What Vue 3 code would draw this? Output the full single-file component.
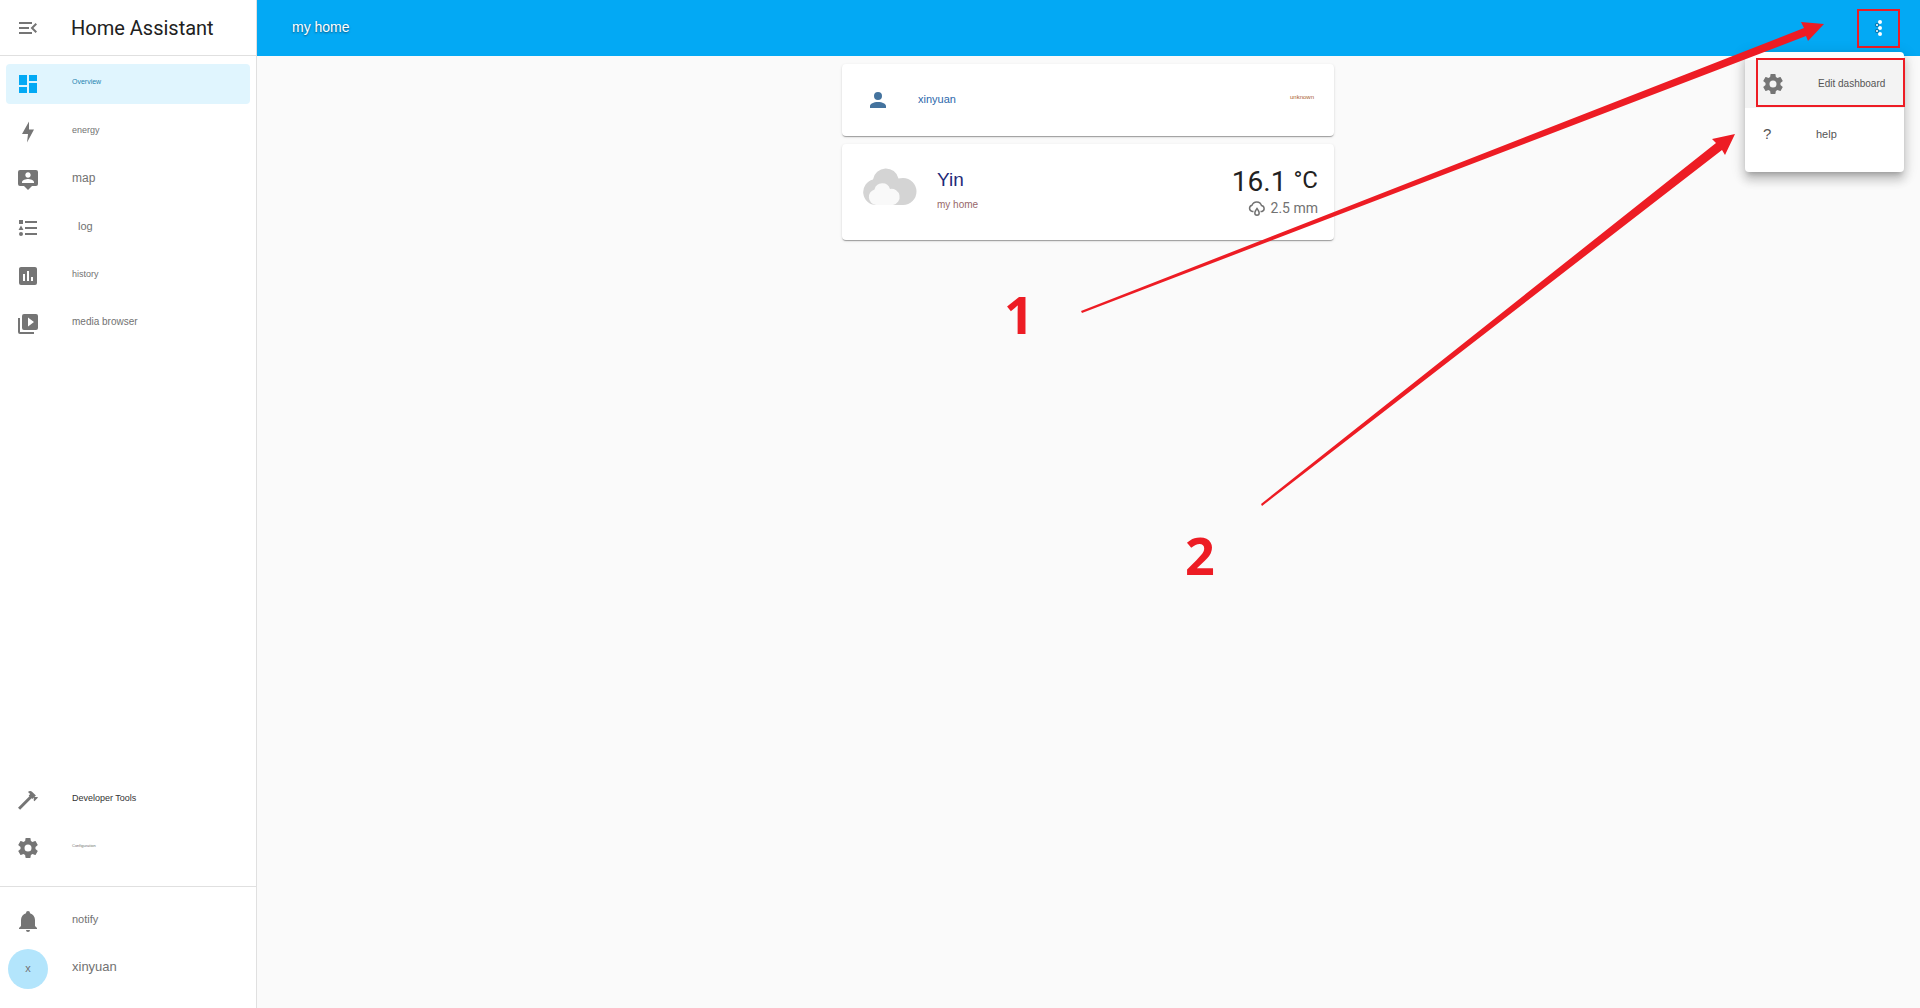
<script setup>
const icons = {
  overview: 'M13,3V9H21V3M13,21H21V11H13M3,21H11V15H3M3,13H11V3H3V13Z',
  energy: 'M11,22.500L12,14H6L13,1.500V9.500H18L11,22.500Z',
  map: 'M20,2H4A2,2 0 0,0 2,4V16A2,2 0 0,0 4,18H8L12,22L16,18H20A2,2 0 0,0 22,16V4A2,2 0 0,0 20,2M12,4.3C13.5,4.3 14.7,5.5 14.7,7C14.7,8.5 13.5,9.7 12,9.7C10.5,9.7 9.3,8.5 9.3,7C9.3,5.5 10.5,4.3 12,4.3M18,15H6V14.1C6,12.1 10,11 12,11C14,11 18,12.1 18,14.1V15Z',
  log: 'M5,9.5L7.5,14H2.5L5,9.5M3,4H7V8H3V4M5,20A2,2 0 0,0 7,18A2,2 0 0,0 5,16A2,2 0 0,0 3,18A2,2 0 0,0 5,20M9,5V7H21V5H9M9,19H21V17H9V19M9,13H21V11H9V13Z',
  history: 'M17,17H15V13H17M13,17H11V7H13M9,17H7V10H9M19,3H5C3.89,3 3,3.89 3,5V19A2,2 0 0,0 5,21H19A2,2 0 0,0 21,19V5C21,3.89 20.1,3 19,3Z',
  media: 'M4,6H2V20A2,2 0 0,0 4,22H18V20H4V6M20,2H8A2,2 0 0,0 6,4V16A2,2 0 0,0 8,18H20A2,2 0 0,0 22,16V4A2,2 0 0,0 20,2M12,14.5V5.5L18,10L12,14.5Z',
  hammer: 'M2,19.63L13.43,8.2L12.72,7.5L14.14,6.07L12,3.89C13.2,2.7 15.09,2.7 16.27,3.89L19.87,7.5L18.45,8.91H21.29L22,9.62L18.45,13.21L17.74,12.5V9.62L16.27,11.04L15.56,10.33L4.13,21.76L2,19.63Z',
  cog: 'M12,15.5A3.5,3.5 0 0,1 8.5,12A3.5,3.5 0 0,1 12,8.5A3.5,3.5 0 0,1 15.5,12A3.5,3.5 0 0,1 12,15.5M19.43,12.97C19.47,12.65 19.5,12.33 19.5,12C19.5,11.67 19.47,11.34 19.43,11L21.54,9.37C21.73,9.22 21.78,8.95 21.66,8.73L19.66,5.27C19.54,5.05 19.27,4.96 19.05,5.05L16.56,6.05C16.04,5.66 15.5,5.32 14.87,5.07L14.5,2.42C14.46,2.18 14.25,2 14,2H10C9.75,2 9.54,2.18 9.5,2.42L9.13,5.07C8.5,5.32 7.96,5.66 7.44,6.05L4.95,5.05C4.73,4.96 4.46,5.05 4.34,5.27L2.34,8.73C2.21,8.95 2.27,9.22 2.46,9.37L4.57,11C4.53,11.34 4.5,11.67 4.5,12C4.5,12.33 4.53,12.65 4.57,12.97L2.46,14.63C2.27,14.78 2.21,15.05 2.34,15.27L4.34,18.73C4.46,18.95 4.73,19.03 4.95,18.95L7.44,17.94C7.96,18.34 8.5,18.68 9.13,18.93L9.5,21.58C9.54,21.82 9.75,22 10,22H14C14.25,22 14.46,21.82 14.5,21.58L14.87,18.93C15.5,18.67 16.04,18.34 16.56,17.94L19.05,18.95C19.27,19.03 19.54,18.95 19.66,18.73L21.66,15.27C21.78,15.05 21.73,14.78 21.54,14.63L19.43,12.97Z',
  bell: 'M21,19V20H3V19L5,17V11C5,7.9 7.03,5.17 10,4.29C10,4.19 10,4.1 10,4A2,2 0 0,1 12,2A2,2 0 0,1 14,4C14,4.1 14,4.19 14,4.29C16.97,5.17 19,7.9 19,11V17L21,19M14,21A2,2 0 0,1 12,23A2,2 0 0,1 10,21',
  account: 'M12,4A4,4 0 0,1 16,8A4,4 0 0,1 12,12A4,4 0 0,1 8,8A4,4 0 0,1 12,4M12,14C16.42,14 20,15.79 20,18V20H4V18C4,15.79 7.58,14 12,14Z',
  menuOpen: 'M21,15.61L19.59,17L14.58,12L19.59,7L21,8.39L17.44,12L21,15.61M3,6H16V8H3V6M3,13V11H13V13H3M3,18V16H16V18H3Z'
}

const mainItems = [
  { icon: 'overview', label: 'Overview', size: 's7', active: true },
  { icon: 'energy', label: 'energy', size: 's9' },
  { icon: 'map', label: 'map', size: 's12' },
  { icon: 'log', label: 'log', size: 's11', inset: true },
  { icon: 'history', label: 'history', size: 's9' },
  { icon: 'media', label: 'media browser', size: 's10' }
]
const toolItems = [
  { icon: 'hammer', label: 'Developer Tools', size: 's9', dark: true },
  { icon: 'cog', label: 'Configuration', size: 's4' }
]
</script>

<template>
  <div class="app">
    <aside class="sidebar">
      <div class="brand">
        <button class="icon-button" aria-label="Toggle sidebar">
          <svg class="icon" viewBox="0 0 24 24"><path :d="icons.menuOpen" /></svg>
        </button>
        <span class="brand-name">Home Assistant</span>
      </div>
      <nav class="items">
        <a v-for="item in mainItems" :key="item.label" href="#" class="item" :class="{ active: item.active }">
          <svg class="icon" viewBox="0 0 24 24"><path :d="icons[item.icon]" /></svg>
          <span class="label" :class="[item.size, { inset: item.inset }]">{{ item.label }}</span>
        </a>
      </nav>
      <nav class="items tools">
        <a v-for="item in toolItems" :key="item.label" href="#" class="item">
          <svg class="icon" viewBox="0 0 24 24"><path :d="icons[item.icon]" /></svg>
          <span class="label" :class="[item.size, { dark: item.dark }]">{{ item.label }}</span>
        </a>
      </nav>
      <div class="items account">
        <a href="#" class="item">
          <svg class="icon" viewBox="0 0 24 24"><path :d="icons.bell" /></svg>
          <span class="label s11">notify</span>
        </a>
        <a href="#" class="item">
          <span class="avatar">x</span>
          <span class="label s13">xinyuan</span>
        </a>
      </div>
    </aside>

    <div class="page">
      <header class="toolbar">
        <h1 class="title">my home</h1>
        <div class="overflow">
          <button class="more" aria-label="Open menu">
            <svg class="icon" viewBox="0 0 24 24">
              <g class="dots"><circle cx="13" cy="6" r="2" /><circle cx="13" cy="12" r="2" /><circle cx="13" cy="18" r="2" /></g>
              <g class="dots-shade"><circle cx="10" cy="9" r="2" /><circle cx="10" cy="15" r="2" /></g>
              <g class="dots"><circle cx="10" cy="9" r="1" /><circle cx="10" cy="15" r="1" /></g>
            </svg>
          </button>
          <div class="menu" role="menu">
            <button class="menu-item selected" role="menuitem">
              <svg class="icon" viewBox="0 0 24 24"><path :d="icons.cog" /></svg>
              <span class="s10">Edit dashboard</span>
            </button>
            <button class="menu-item help" role="menuitem">
              <span class="question">?</span>
              <span class="s11">help</span>
            </button>
          </div>
        </div>
      </header>

      <main class="view">
        <section class="card person">
          <svg class="icon" viewBox="0 0 24 24"><path :d="icons.account" /></svg>
          <span class="person-name s11">xinyuan</span>
          <span class="person-state">unknown</span>
        </section>
        <section class="card weather">
          <svg class="cloud" viewBox="0 0 54 38">
            <path fill="#d4d4d4" d="M13 38A13 13 0 0 1 10 12.400A13 13 0 0 1 35.500 11.500Q37 11 40 11A13.500 13.500 0 0 1 40 38Z" />
            <path fill="#f9f9f9" d="M13 38A8 8 0 0 1 11.500 22.400A8 8 0 0 1 27 22A8 8 0 0 1 30 38Z" />
          </svg>
          <div class="place">
            <span class="condition">Yin</span>
            <span class="s10 place-name">my home</span>
          </div>
          <div class="reading">
            <div class="temperature">16.1 <span class="unit">°C</span></div>
            <div class="rain">
              <svg class="rain-icon" viewBox="0 0 18 16">
                <path d="M5.500 11.500H4.500A3.200 3.200 0 0 1 4 5.200A5 5 0 0 1 13.500 5.500A3.100 3.100 0 0 1 14 11.500H12.500M9 8.500C7.500 10.500 6.800 11.700 6.800 13A2.200 2.200 0 0 0 11.200 13C11.200 11.700 10.500 10.500 9 8.500Z" />
              </svg>
              <span>2.5 mm</span>
            </div>
          </div>
        </section>
      </main>
    </div>

    <svg class="arrows" viewBox="0 0 1920 1008" preserveAspectRatio="xMaxYMin meet">
      <path d="M1081 311L1804 28L1801 22L1824 24L1808 41L1806 36L1082 313Z" />
      <path d="M1261 504L1716 143L1712 139L1735 134L1725 155L1722 150L1262 506Z" />
    </svg>
    <span class="step step-one">1</span>
    <span class="step step-two">2</span>
  </div>
</template>

<style>
body {
  margin: 0;
  background: #fafafa;
}
</style>

<style scoped>
*,
*::after {
  box-sizing: border-box;
}
.app {
  position: relative;
  display: flex;
  min-height: 100vh;
  font-family: "Liberation Sans", Arial, sans-serif;
  color: #727272;
}
button {
  padding: 0;
  border: 0;
  background: none;
  font-family: inherit;
  color: inherit;
}
.icon {
  display: block;
  flex: none;
  width: 24px;
  height: 24px;
  fill: #757575;
}
.s4 { font-size: 4px; }
.s7 { font-size: 7px; }
.s9 { font-size: 9px; }
.s10 { font-size: 10px; }
.s11 { font-size: 11px; }
.s12 { font-size: 12px; }
.s13 { font-size: 13px; }

.sidebar {
  display: flex;
  flex-direction: column;
  flex: none;
  width: 257px;
  background: #fff;
  border-right: 1px solid #e0e0e0;
}
.brand {
  display: flex;
  align-items: center;
  gap: 31px;
  height: 56px;
  padding-left: 16px;
  border-bottom: 1px solid #e0e0e0;
}
.brand-name {
  font-family: Roboto, sans-serif;
  font-size: 20px;
  color: #212121;
}
.items {
  display: flex;
  flex-direction: column;
  gap: 8px;
  padding: 8px 6px;
}
.tools {
  margin-top: auto;
  padding-bottom: 18px;
}
.account {
  padding: 14px 6px 19px;
  border-top: 1px solid #e0e0e0;
}
.item {
  display: flex;
  align-items: center;
  gap: 32px;
  height: 40px;
  padding-left: 10px;
  border-radius: 4px;
  color: #727272;
  text-decoration: none;
}
.label {
  padding-bottom: 5px;
}
.inset {
  padding-left: 6px;
}
.dark {
  color: #333;
}
.active {
  background: #e0f5fe;
  color: #2584b0;
}
.active .icon {
  fill: #03a9f4;
}
.avatar {
  display: flex;
  align-items: center;
  justify-content: center;
  width: 40px;
  height: 40px;
  margin: 0 -8px;
  padding-bottom: 2px;
  border-radius: 50%;
  background: #b3e5fc;
  font-size: 11px;
}

.page {
  flex: 1;
  min-width: 0;
}
.toolbar {
  display: flex;
  align-items: center;
  justify-content: space-between;
  height: 56px;
  padding: 0 20px 0 35px;
  background: #03a9f4;
}
.title {
  margin: 0;
  padding-bottom: 2px;
  font-size: 14px;
  font-weight: 400;
  color: #fff;
  text-shadow: 0 1px 2px #0b4f78;
}
.overflow {
  position: relative;
}
.more {
  display: flex;
  align-items: center;
  justify-content: center;
  width: 43px;
  height: 39px;
  border: 2px solid #ed1c24;
}
.dots { fill: #fff; }
.dots-shade { fill: #0b6fa3; }
.menu {
  position: absolute;
  top: 43px;
  right: -4px;
  width: 159px;
  height: 120px;
  padding-top: 8px;
  border-radius: 4px;
  background: #fff;
  box-shadow: 0 5px 5px -3px rgba(0, 0, 0, .2), 0 8px 10px 1px rgba(0, 0, 0, .14), 0 3px 14px 2px rgba(0, 0, 0, .12);
}
.menu-item {
  display: flex;
  align-items: center;
  gap: 33px;
  width: 100%;
  height: 48px;
  padding-left: 16px;
  color: #555;
}
.help {
  padding-top: 4px;
}
.selected {
  background: #f3f3f3;
}
.selected::after {
  content: "";
  position: absolute;
  top: 6px;
  right: -1px;
  width: 149px;
  height: 49px;
  border: 2px solid #ed1c24;
}
.question {
  width: 22px;
  font-size: 15px;
  text-align: left;
  padding-left: 2px;
}

.view {
  display: flex;
  flex-direction: column;
  align-items: center;
  gap: 8px;
  padding: 8px 5px 8px 4px;
}
.card {
  display: flex;
  align-items: center;
  width: 100%;
  max-width: 492px;
  border-radius: 4px;
  background: #fff;
  box-shadow: 0 2px 1px -1px rgba(0, 0, 0, .2), 0 1px 1px 0 rgba(0, 0, 0, .14), 0 1px 3px 0 rgba(0, 0, 0, .12);
}
.person {
  height: 72px;
  padding: 0 20px 0 24px;
}
.person .icon {
  fill: #44739e;
}
.person-name {
  margin-left: 28px;
  padding-bottom: 2px;
  color: #2d68ab;
}
.person-state {
  margin-left: auto;
  padding-bottom: 6px;
  font-size: 6px;
  color: #a8602e;
}
.weather {
  height: 96px;
  padding: 0 16px 0 21px;
}
.cloud {
  width: 54px;
  height: 38px;
  margin-bottom: 12px;
}
.place {
  display: flex;
  flex-direction: column;
  gap: 8px;
  margin-left: 20px;
  padding-bottom: 6px;
}
.condition {
  font-size: 19px;
  line-height: 22px;
  color: #1f2a78;
}
.place-name {
  color: #98676a;
}
.reading {
  display: flex;
  flex-direction: column;
  align-items: flex-end;
  margin-left: auto;
  font-family: Roboto, sans-serif;
}
.temperature {
  font-size: 28px;
  line-height: 32px;
  color: #212121;
}
.unit {
  font-size: 24px;
  line-height: 1;
  vertical-align: 3px;
}
.rain {
  display: flex;
  align-items: center;
  gap: 5px;
  font-size: 14px;
  line-height: 20px;
}
.rain-icon {
  width: 18px;
  height: 16px;
  fill: none;
  stroke: #727272;
  stroke-width: 1.5;
}

.arrows {
  position: absolute;
  top: 0;
  right: 0;
  width: 100%;
  fill: #ed1c24;
  pointer-events: none;
}
.step {
  position: absolute;
  font-family: "Noto Sans", "Open Sans", sans-serif;
  font-size: 52px;
  line-height: 52px;
  font-weight: 700;
  color: #ed1c24;
}
.step-one {
  left: 1004px;
  top: 288px;
}
.step-two {
  left: 1185px;
  top: 529px;
}
</style>
